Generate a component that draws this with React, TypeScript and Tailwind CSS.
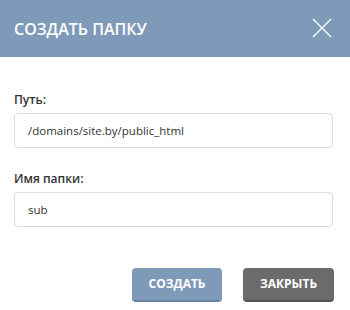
const font = { fontFamily: '"Open Sans", "Noto Sans", sans-serif' };

function Field({ label, value }: { label: string; value: string }) {
  return (
    <div className="flex flex-col">
      <label className="text-[12px] font-semibold text-[#333] leading-[18px]">
        {label}
      </label>
      <div className="mt-[4px] h-[35px] rounded-[4px] border border-[#dcdcdc] bg-white pl-[13px] flex items-center text-[11.5px] text-[#333]">
        {value}
      </div>
    </div>
  );
}

export default function App() {
  return (
    <div className="w-[350px] h-[310px] bg-white" style={font}>
      <div className="h-[57px] bg-[#7f9ab8] flex items-center justify-between pl-[14px] pr-[18px]">
        <h2 className="text-[16px] font-semibold text-white uppercase">
          Создать папку
        </h2>
        <svg width="20" height="20" viewBox="0 0 20 20" className="-mt-[1px]">
          <path d="M1 1L19 19M19 1L1 19" stroke="white" strokeWidth="1.4" fill="none" />
        </svg>
      </div>
      <div className="pl-[14px] pr-[17px] pt-[34px] flex flex-col gap-[22px]">
        <Field label="Путь:" value="/domains/site.by/public_html" />
        <Field label="Имя папки:" value="sub" />
      </div>
      <div className="flex justify-end gap-[21px] pr-[16px] mt-[41px]">
        <button className="h-[34px] w-[90px] rounded-[4px] bg-[#7f9ab8] border-b-2 border-[#6a85a3] text-white text-[12px] font-bold uppercase">
          Создать
        </button>
        <button className="h-[34px] w-[91px] rounded-[4px] bg-[#6b6b6b] border-b-2 border-[#555] text-white text-[12px] font-bold uppercase">
          Закрыть
        </button>
      </div>
    </div>
  );
}
